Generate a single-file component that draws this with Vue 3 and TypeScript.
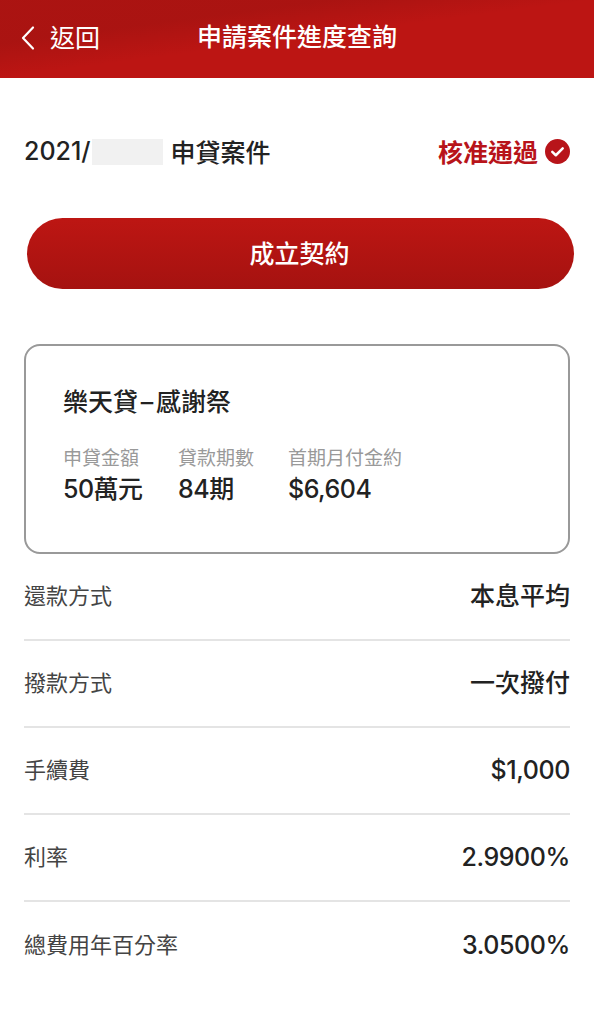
<script setup lang="ts">
const stats = [
  { label: '申貸金額', value: '50萬元' },
  { label: '貸款期數', value: '84期' },
  { label: '首期月付金約', value: '$6,604' },
]
const rows = [
  { label: '還款方式', value: '本息平均', num: false },
  { label: '撥款方式', value: '一次撥付', num: false },
  { label: '手續費', value: '$1,000', num: true },
  { label: '利率', value: '2.9900%', num: true },
  { label: '總費用年百分率', value: '3.0500%', num: true },
]
</script>

<template>
  <div class="page">
    <header class="bar">
      <div class="back">
        <svg class="chev" viewBox="0 0 16 26" width="16" height="26">
          <path d="M13 2.5 3 13l10 10.5" fill="none" stroke="#fff" stroke-width="2.2" stroke-linecap="round" stroke-linejoin="round" />
        </svg>
        <span>返回</span>
      </div>
      <h1 class="title">申請案件進度查詢</h1>
    </header>

    <main class="content">
      <div class="status">
        <div class="case">
          <span class="year">2021/</span>
          <span class="mask"></span>
          <span>申貸案件</span>
        </div>
        <div class="approved">
          <span>核准通過</span>
          <svg class="ok" viewBox="0 0 24 24" width="25" height="25">
            <circle cx="12" cy="12" r="12" fill="#b8141a" />
            <path d="M7 12.4l3.4 3.2L17 9" fill="none" stroke="#fff" stroke-width="2.4" stroke-linecap="round" stroke-linejoin="round" />
          </svg>
        </div>
      </div>

      <button class="cta" type="button">成立契約</button>

      <section class="card">
        <h2 class="card-title">樂天貸<span class="dash">–</span>感謝祭</h2>
        <div class="stats">
          <div v-for="s in stats" :key="s.label" class="stat">
            <span class="stat-label">{{ s.label }}</span>
            <span class="stat-value">{{ s.value }}</span>
          </div>
        </div>
      </section>

      <ul class="rows">
        <li v-for="r in rows" :key="r.label" class="row">
          <span class="row-label">{{ r.label }}</span>
          <span class="row-value" :class="{ num: r.num }">{{ r.value }}</span>
        </li>
      </ul>
    </main>
  </div>
</template>

<style scoped>
.page {
  width: 594px;
  height: 1024px;
  background: #fff;
  overflow: hidden;
  color: #222;
  font-family: Inter, "Noto Sans CJK TC", sans-serif;
}
.bar {
  height: 78px;
  box-sizing: border-box;
  display: flex;
  align-items: center;
  position: relative;
  background:
    linear-gradient(172.5deg, rgba(155, 18, 16, 0.5) 0%, rgba(155, 18, 16, 0.55) 28%, rgba(180, 20, 18, 0) 50%),
    #bc1513;
  color: #fff;
  padding: 0 0 2px 20px;
}
.back {
  display: flex;
  align-items: center;
  gap: 14px;
  font-size: 25px;
  line-height: 30px;
}
.title {
  margin: 0;
  position: absolute;
  left: 197px;
  top: 22px;
  font-size: 25px;
  font-weight: 500;
  line-height: 30px;
}
.content {
  padding: 0 24px;
}
.status {
  height: 148px;
  box-sizing: border-box;
  padding-bottom: 3px;
  display: flex;
  justify-content: space-between;
  align-items: center;
}
.case {
  display: flex;
  align-items: center;
  font-size: 25px;
  font-weight: 500;
  color: #222;
}
.mask {
  width: 71px;
  height: 26px;
  background: #f1f1f1;
  margin: 3px 8px 0 1px;
}
.approved {
  display: flex;
  align-items: center;
  gap: 7px;
  font-size: 25px;
  font-weight: 700;
  color: #b8141a;
}
.ok {
  margin-top: 2px;
}
.cta {
  display: block;
  width: 547px;
  height: 71px;
  margin: -8px 0 0 3px;
  border: none;
  border-radius: 36px;
  background: linear-gradient(180deg, #bd1613 0%, #a51210 100%);
  color: #fff;
  font-family: inherit;
  font-size: 25px;
  font-weight: 500;
  padding: 0 2px 3px 0;
}
.card {
  margin-top: 55px;
  height: 210px;
  box-sizing: border-box;
  border: 2px solid #999;
  border-radius: 16px;
  padding: 39px 37px 0;
}
.card-title {
  margin: 0;
  font-size: 25px;
  font-weight: 500;
  line-height: 34px;
  color: #222;
}
.dash {
  display: inline-block;
  width: 18px;
  text-align: center;
}
.stats {
  display: flex;
  margin-top: 27px;
}
.stat {
  display: flex;
  flex-direction: column;
}
.stat:nth-child(1) {
  width: 115px;
}
.stat:nth-child(2) {
  width: 110px;
}
.stat-label {
  font-size: 19px;
  line-height: 26px;
  color: #999;
}
.stat-value {
  font-size: 25px;
  font-weight: 500;
  line-height: 34px;
  letter-spacing: -0.5px;
  color: #222;
}
.rows {
  list-style: none;
  margin: 0;
  padding: 0;
}
.row {
  height: 87px;
  box-sizing: border-box;
  display: flex;
  justify-content: space-between;
  align-items: center;
  border-bottom: 2px solid #e4e4e4;
  padding-bottom: 5px;
}
.row:last-child {
  border-bottom: none;
}
.row-label {
  font-size: 22px;
  color: #444;
}
.row-value {
  font-size: 25px;
  font-weight: 500;
  color: #222;
}
.row-value.num {
  letter-spacing: -0.4px;
  padding-top: 3px;
}
</style>

<style>
html, body { background: #fff; }
</style>
